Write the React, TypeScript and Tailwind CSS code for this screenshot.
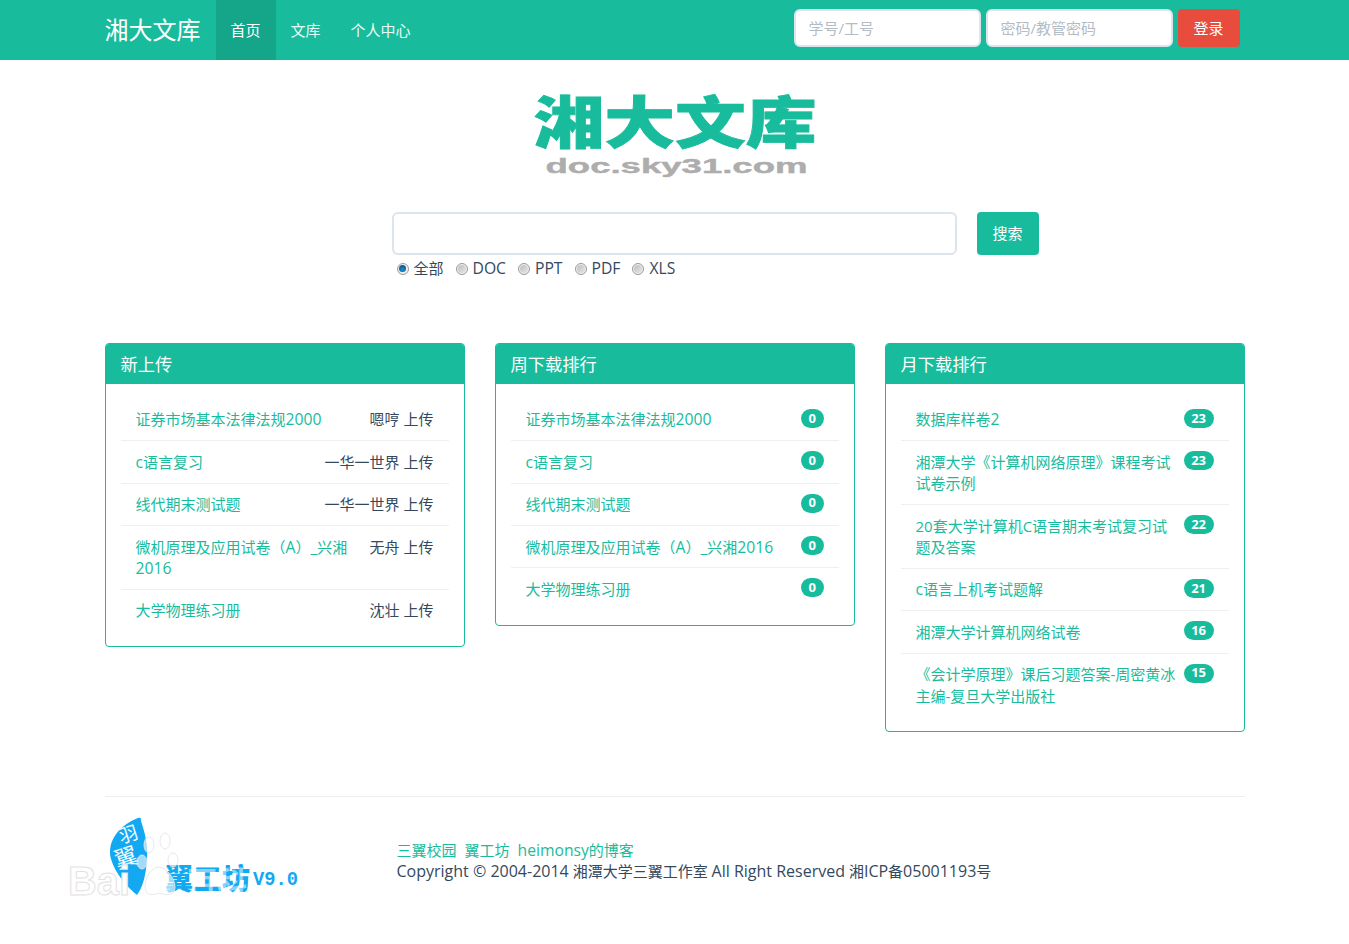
const font = '[font-family:"Open_Sans","Noto_Sans_CJK_SC",sans-serif]';

function T({ s, big }: { s: string; big?: boolean }) {
  return (
    <>
      {s.split(/([\x21-\x7e©](?:[\x20-\x7e©]*[\x21-\x7e©])?)/).map((part, i) =>
        i % 2 === 1 ? (
          <span key={i} className={big ? "text-[16px]" : "text-[15.7px]"}>{part}</span>
        ) : (
          <span key={i}>{part}</span>
        ),
      )}
    </>
  );
}

function Logo() {
  return (
    <svg width="290" height="92" viewBox="0 0 290 92" aria-label="湘大文库">
      <text x="3.5" y="54" textLength="283" lengthAdjust="spacingAndGlyphs" fontFamily='"Noto Sans CJK SC", sans-serif' fontWeight="900" fontSize="56" fill="#18bc9c" stroke="#18bc9c" strokeWidth="0.8">湘大文库</text>
      <text x="15.5" y="84" textLength="262" lengthAdjust="spacingAndGlyphs" fontFamily='"Liberation Sans", sans-serif' fontWeight="700" fontSize="20" fill="#adadad" stroke="#adadad" strokeWidth="0.4">doc.sky31.com</text>
    </svg>
  );
}

function FooterLogo() {
  return (
    <svg width="240" height="90" viewBox="0 0 240 90" aria-label="翼工坊">
      <path d="M73 3 C76 2 76 3 76 6 C80 18 83 30 82 44 C81 60 78 72 72 80 C62 72 50 58 46 44 C42 30 50 12 73 3 Z" fill="#12a9f2" />
      <text x="56" y="27" fontFamily='"Noto Sans CJK SC", serif' fontWeight="400" fontSize="19" fill="#f2fbff" transform="rotate(-18 62 27)">羽</text>
      <text x="52" y="51" fontFamily='"Noto Sans CJK SC", serif' fontWeight="400" fontSize="23" fill="#f2fbff" transform="rotate(-18 62 51)">翼</text>
      <text x="100" y="75" textLength="85" lengthAdjust="spacingAndGlyphs" fontFamily='"Noto Sans CJK SC", sans-serif' fontWeight="900" fontSize="29" fill="#12a9f2">翼工坊</text>
      <text x="188" y="70" textLength="45" lengthAdjust="spacingAndGlyphs" fontFamily='"Liberation Mono", monospace' fontWeight="700" fontSize="21" fill="#12a9f2">V9.0</text>
      <g fill="#ffffff" fillOpacity="0.6" stroke="#e2e5e8" strokeOpacity="0.9">
        <ellipse cx="84" cy="30" rx="5" ry="8" />
        <ellipse cx="100" cy="26" rx="5" ry="8" />
        <ellipse cx="77" cy="47" rx="5" ry="7" />
        <ellipse cx="108" cy="45" rx="5" ry="7" />
        <path d="M80 72 C80 60 88 52 94 52 C100 52 110 62 110 72 C110 82 100 80 95 78 C90 80 80 82 80 72 Z" />
      </g>
      <text x="3" y="80" textLength="62" lengthAdjust="spacingAndGlyphs" fontFamily='"Liberation Sans", sans-serif' fontWeight="700" fontSize="40" fill="#ffffff" stroke="#e2e2e2" strokeWidth="1">Bai</text>
      <text x="122" y="78" fontFamily='"Noto Sans CJK SC", sans-serif' fontWeight="700" fontSize="30" fill="#ffffff" fillOpacity="0.5">百科</text>
    </svg>
  );
}

function Radio({ label, checked }: { label: string; checked?: boolean }) {
  return (
    <span className="flex items-center gap-[5px]">
      <span className="flex h-[12px] w-[12px] items-center justify-center rounded-full border border-[#9a9a9a] bg-[#f0f0f0]">
        {checked ? (
          <span className="h-[7px] w-[7px] rounded-full bg-[radial-gradient(circle_at_50%_65%,#1f8fd0,#0e3f6e)]" />
        ) : (
          <span className="h-[8px] w-[8px] rounded-full bg-[linear-gradient(135deg,#bdbdbd,#e6e6e6)]" />
        )}
      </span>
      <span><T s={label} /></span>
    </span>
  );
}

type Row = { title: string; right: string; plain?: boolean };

function Panel({ title, rows, badge }: { title: string; rows: Row[]; badge?: boolean }) {
  return (
    <div className="rounded-[4px] border border-[#18bc9c] bg-white">
      <div className="flex h-[40px] items-center rounded-t-[3px] bg-[#18bc9c] px-[15px] pt-[1px] text-[17.25px] text-white">{title}</div>
      <div className="px-[15px] pt-[15px] pb-[14.7px]">
        {rows.map((r, i) => (
          <div key={i} className={`flex justify-between px-[15px] pb-[9.4px] leading-[21.43px] ${i === 0 ? "pt-[10px]" : "border-t border-[#ecf0f1] pt-[10.6px]"}`}>
            <a className="min-w-0 flex-1 text-[#18bc9c]">{r.plain ? r.title : <T s={r.title} />}</a>
            {badge ? (
              <span className={`ml-[6px] flex h-[19px] shrink-0 items-center justify-center self-start rounded-[10px] bg-[#18bc9c] px-[7.5px] text-[13px] font-bold text-white ${i === 0 ? "" : "-mt-[0.6px]"}`}>{r.right}</span>
            ) : (
              <span className="ml-[20px] shrink-0 text-[#34495e]">{r.right}</span>
            )}
          </div>
        ))}
      </div>
    </div>
  );
}

const p1: Row[] = [
  { title: "证券市场基本法律法规2000", right: "嗯哼 上传" },
  { title: "c语言复习", right: "一华一世界 上传" },
  { title: "线代期末测试题", right: "一华一世界 上传" },
  { title: "微机原理及应用试卷（A）_兴湘2016", right: "无舟 上传" },
  { title: "大学物理练习册", right: "沈壮 上传" },
];
const p2: Row[] = [
  { title: "证券市场基本法律法规2000", right: "0" },
  { title: "c语言复习", right: "0" },
  { title: "线代期末测试题", right: "0" },
  { title: "微机原理及应用试卷（A）_兴湘2016", right: "0" },
  { title: "大学物理练习册", right: "0" },
];
const p3: Row[] = [
  { title: "数据库样卷2", right: "23" },
  { title: "湘潭大学《计算机网络原理》课程考试试卷示例", right: "23" },
  { title: "20套大学计算机C语言期末考试复习试题及答案", right: "22", plain: true },
  { title: "c语言上机考试题解", right: "21" },
  { title: "湘潭大学计算机网络试卷", right: "16" },
  { title: "《会计学原理》课后习题答案-周密黄冰主编-复旦大学出版社", right: "15", plain: true },
];

export default function App() {
  const inputCls =
    "h-[38px] w-[187px] rounded-[6px] border-2 border-[#dce4ec] bg-white px-[13px] text-[15px] outline-none placeholder:text-[#b2bcc5]";
  return (
    <div className={`${font} min-h-[944px] bg-white text-[15px] text-[#34495e]`}>
      <nav className="h-[60px] bg-[#18bc9c]">
        <div className="mx-auto flex h-full w-[1140px] items-stretch">
          <div className="flex w-[111px] items-center text-[24px] text-white">湘大文库</div>
          <div className="flex items-center bg-[#15a589] px-[15px] text-white">首页</div>
          <div className="flex items-center px-[15px] text-[#eafaf6]">文库</div>
          <div className="flex items-center px-[15px] text-[#eafaf6]">个人中心</div>
          <div className="mr-[5px] ml-auto flex items-center gap-[5px] pb-[4px]">
            <input className={inputCls} placeholder="学号/工号" />
            <input className={inputCls} placeholder="密码/教管密码" />
            <button className="h-[38px] w-[62px] rounded-[4px] bg-[#e74c3c] text-white">登录</button>
          </div>
        </div>
      </nav>

      <div className="flex h-[152px] justify-center pt-[29px]">
        <Logo />
      </div>

      <div className="mx-auto w-[1140px]">
        <div className="ml-[287px] flex gap-[20px]">
          <input className="h-[43px] w-[565px] rounded-[6px] border-2 border-[#dce4ec] outline-none" />
          <button className="h-[43px] w-[62px] rounded-[4px] bg-[#18bc9c] text-white">搜索</button>
        </div>
        <div className="mt-[3px] ml-[292px] flex h-[21px] items-center gap-[12px]">
          <Radio label="全部" checked />
          <Radio label="DOC" />
          <Radio label="PPT" />
          <Radio label="PDF" />
          <Radio label="XLS" />
        </div>

        <div className="mt-[64.3px] grid grid-cols-3 items-start gap-[30px]">
          <Panel title="新上传" rows={p1} />
          <Panel title="周下载排行" rows={p2} badge />
          <Panel title="月下载排行" rows={p3} badge />
        </div>

        <div className="mt-[63.7px] flex border-t border-[#eeeeee] pt-[18px]">
          <div className="-ml-[40px] w-[332px] shrink-0">
            <FooterLogo />
          </div>
          <div className="pt-[25px] leading-[21px]">
            <div className="flex gap-[8px] text-[#18bc9c]">
              <a>三翼校园</a>
              <a>翼工坊</a>
              <a><T s="heimonsy的博客" /></a>
            </div>
            <div><T big s="Copyright © 2004-2014 " />湘潭大学三翼工作室<T big s=" All Right Reserved " />湘<T big s="ICP" />备<T big s="05001193" />号</div>
          </div>
        </div>
      </div>
    </div>
  );
}
